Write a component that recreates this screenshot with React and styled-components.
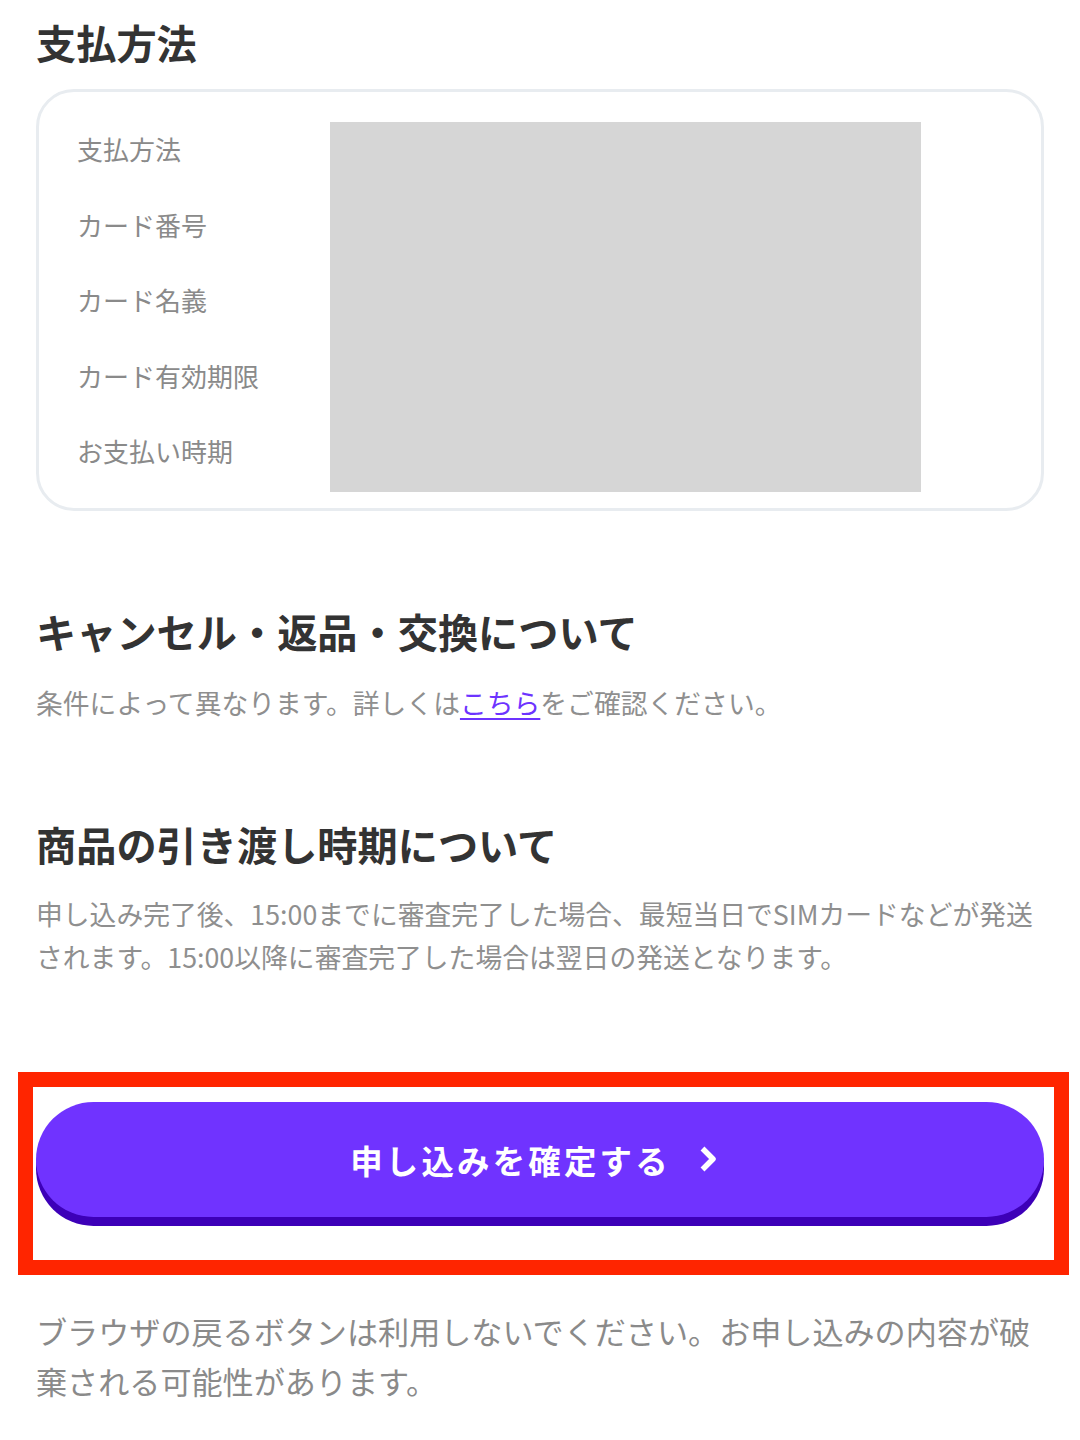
import React from 'react';
import styled, { createGlobalStyle } from 'styled-components';

const GlobalStyle = createGlobalStyle`
  html, body {
    margin: 0;
    padding: 0;
    background: #fff;
  }
  body {
    font-family: "Noto Sans CJK JP", "Noto Sans", sans-serif;
    color: #333;
  }
  * {
    box-sizing: border-box;
  }
`;

const Page = styled.main`
  width: 1080px;
  padding: 12px 36px 40px;
`;

const Heading = styled.h2`
  margin: 0;
  font-size: 40.2px;
  line-height: 60px;
  font-weight: 700;
  color: #333;
  margin-bottom: ${props => props.gap || '19px'};
`;

const Section = styled.section`
  margin-top: ${props => props.top || '0'};
`;

const Card = styled.div`
  border: 3px solid #e8ecf0;
  border-radius: 38px;
  padding: 19px 0 16px 38px;
  display: grid;
  grid-template-columns: 253px 591px;
  align-items: start;
`;

const LabelList = styled.ul`
  margin: 0;
  padding: 0;
  list-style: none;
`;

const Label = styled.li`
  font-size: 26px;
  line-height: 75.6px;
  color: #8a8a8a;
`;

const Masked = styled.div`
  margin-top: 11px;
  height: 370px;
  background: #d6d6d6;
`;

const Text = styled.p`
  margin: 0;
  font-size: 26.8px;
  line-height: 43.2px;
  color: #8f8f8f;
`;

const Link = styled.a`
  color: #6d33ff;
  text-decoration: underline;
  text-underline-offset: 4px;
`;

const ButtonArea = styled.div`
  position: relative;
  margin-top: 123px;
`;

const Highlight = styled.div`
  position: absolute;
  top: -30px;
  left: -18px;
  right: -25px;
  bottom: -58px;
  border: 15px solid #ff2500;
  pointer-events: none;
`;

const SubmitButton = styled.button`
  display: flex;
  align-items: center;
  justify-content: center;
  gap: 28px;
  width: 100%;
  height: 115px;
  border: none;
  border-radius: 58px;
  background: #7033ff;
  box-shadow: 0 9px 0 #3d00b8;
  color: #fff;
  font-family: "Noto Sans CJK JP", "Noto Sans", sans-serif;
  font-size: 32.4px;
  font-weight: 700;
  letter-spacing: 0.1em;
  cursor: pointer;
  padding: 0 12px 0 0;

  svg {
    flex: none;
  }
`;

const Note = styled.p`
  margin: 89px 0 0;
  font-size: 31.1px;
  line-height: 50px;
  color: #8a8a8a;
`;

const Chevron = () => (
  <svg width="19" height="28" viewBox="0 0 19 28">
    <path
      d="M3.5 3.5 L14 14 L3.5 24.5"
      fill="none"
      stroke="#fff"
      strokeWidth="5.5"
      strokeLinejoin="round"
    />
  </svg>
);

const labels = ['支払方法', 'カード番号', 'カード名義', 'カード有効期限', 'お支払い時期'];

export default function App() {
  return (
    <>
      <GlobalStyle />
      <Page>
        <Section>
          <Heading gap="17px">支払方法</Heading>
          <Card>
            <LabelList>
              {labels.map(label => (
                <Label key={label}>{label}</Label>
              ))}
            </LabelList>
            <Masked />
          </Card>
        </Section>

        <Section top="90px">
          <Heading gap="19.5px">キャンセル・返品・交換について</Heading>
          <Text>
            条件によって異なります。詳しくは<Link href="#">こちら</Link>をご確認ください。
          </Text>
        </Section>

        <Section top="90px">
          <Heading gap="18.5px">商品の引き渡し時期について</Heading>
          <Text>
            申し込み完了後、15:00までに審査完了した場合、最短当日でSIMカードなどが発送されます。15:00以降に審査完了した場合は翌日の発送となります。
          </Text>
        </Section>

        <ButtonArea>
          <Highlight />
          <SubmitButton type="button">
            <span>申し込みを確定する</span>
            <Chevron />
          </SubmitButton>
        </ButtonArea>

        <Note>
          ブラウザの戻るボタンは利用しないでください。お申し込みの内容が破棄される可能性があります。
        </Note>
      </Page>
    </>
  );
}
